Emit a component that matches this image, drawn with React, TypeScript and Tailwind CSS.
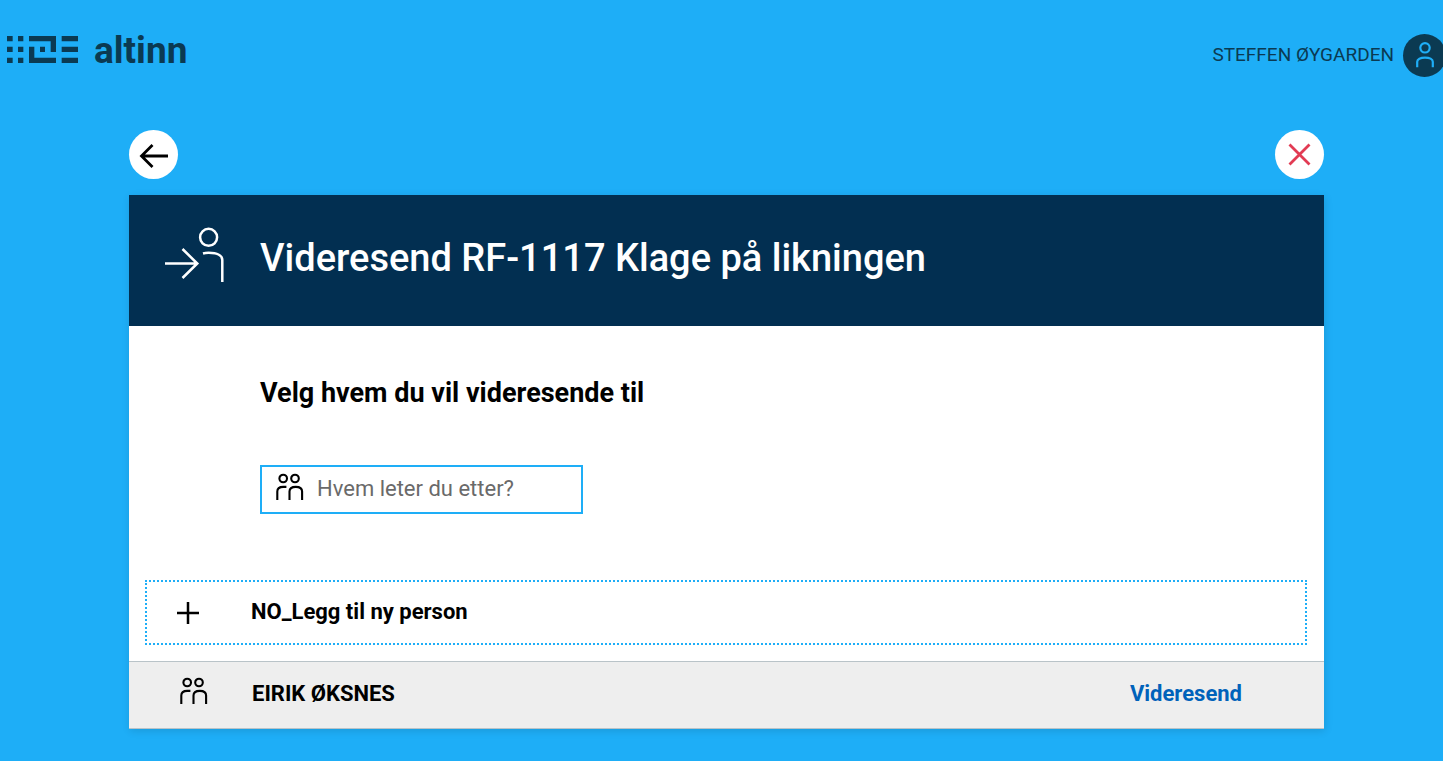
import { useState } from "react";

function AltinnMark() {
  return (
    <svg width="71" height="27" viewBox="0 0 213 81" fill="currentColor" aria-hidden="true">
      <path d="M0 0h17v16H0zM33 0h16v16H33zM0 32h17v16H0zM33 32h16v16H33zM0 65h17v16H0zM33 65h16v16H33z" />
      <path d="M66 0h81v48h-16V16H66zM66 32h16v33h65v16H66zM99 32h15v16H99z" />
      <path d="M164 0h49v16h-49zM164 32h49v16h-49zM164 65h49v16h-49z" />
    </svg>
  );
}

function PersonIcon() {
  return (
    <svg width="20" height="26" viewBox="0 0 20 26" fill="none" stroke="currentColor" strokeWidth="2.2" aria-hidden="true">
      <circle cx="10" cy="5.8" r="4.7" />
      <path d="M2.2 25.2v-5.4c0-2.6 3.2-4.2 7.8-4.2s7.8 1.6 7.8 4.2v5.4" />
    </svg>
  );
}

function PeopleIcon() {
  return (
    <svg width="28" height="28" viewBox="0 0 28 28" fill="none" stroke="currentColor" strokeWidth="2.1" aria-hidden="true">
      <circle cx="7.2" cy="5.5" r="3.8" />
      <circle cx="19" cy="5.5" r="3.8" />
      <path d="M1.3 27v-8.5c0-3.8 2.4-4.6 5.9-4.6h3.2" />
      <path d="M13.500 27v-8.500c0-3.500 2.300-4.600 6.300-4.600s6.300 1.100 6.300 4.600V27" />
    </svg>
  );
}

function ForwardIcon() {
  return (
    <svg width="60" height="56" viewBox="0 0 60 56" fill="none" stroke="currentColor" strokeWidth="2.5" aria-hidden="true">
      <circle cx="43.6" cy="10.3" r="8.5" />
      <path d="M38 26.500c2-.6 3.800-.7 5.600-.7 9 0 13.700 3 13.700 7.200v22" />
      <path d="M0 36.500h32.500M17.500 22l14.800 14.500L17.500 51" />
    </svg>
  );
}

const people = ["EIRIK ØKSNES"];

export default function App() {
  const [query, setQuery] = useState("");

  return (
    <div className="min-h-screen overflow-hidden bg-[#1eaef7] pb-8 font-['Roboto','Liberation_Sans',sans-serif] text-black">
      <header className="flex h-[130px] items-start justify-between pl-[7px] text-[#0b3a52]">
        <a href="#" className="flex items-start gap-4 pt-[26px]">
          <span className="pt-2.5">
            <AltinnMark />
          </span>
          <span className="text-[37px] leading-[50px] font-bold">altinn</span>
        </a>
        <button type="button" className="-mr-[3px] flex items-start gap-[9px] pt-[34px]">
          <span className="text-[19px] leading-[42px]">STEFFEN ØYGARDEN</span>
          <span className="flex size-[43px] items-start justify-center rounded-full bg-[#0b3a52] pt-2 text-[#1eaef7]">
            <PersonIcon />
          </span>
        </button>
      </header>

      <main className="pr-[119px] pl-[129px]">
        <nav className="mb-4 flex justify-between">
          <button type="button" aria-label="Tilbake" className="flex size-[49px] items-center justify-center rounded-full bg-white">
            <svg width="30" height="26" viewBox="0 0 30 26" fill="none" stroke="currentColor" strokeWidth="2.8" aria-hidden="true">
              <path d="M29 14H2.500M13.500 3L2.500 14l11 11" />
            </svg>
          </button>
          <button type="button" aria-label="Lukk" className="flex size-[49px] items-center justify-center rounded-full bg-white text-[#e23b53]">
            <svg width="23" height="23" viewBox="0 0 23 23" fill="none" stroke="currentColor" strokeWidth="2.8" aria-hidden="true">
              <path d="M1.500 1.500l20 20M21.500 1.500l-20 20" />
            </svg>
          </button>
        </nav>

        <section className="bg-white shadow-[1px_2px_8px_rgba(0,0,0,0.12)]">
          <div className="flex h-[131px] items-start bg-[#022f51] pt-8 pl-9 text-white">
            <div className="w-[95px] shrink-0">
              <ForwardIcon />
            </div>
            <h1 className="text-[38px] leading-[62px] font-medium">Videresend RF-1117 Klage på likningen</h1>
          </div>

          <div className="px-[131px] pt-[50px] pb-[66px]">
            <h2 className="mb-[55px] text-[27px] leading-[34px] font-bold">Velg hvem du vil videresende til</h2>
            <label className="flex h-[49px] w-[323px] items-center gap-[13px] border-2 border-[#1eaef7] pl-3.5">
              <span className="shrink-0 pb-1.5">
                <PeopleIcon />
              </span>
              <input
                type="text"
                aria-label="Hvem leter du etter?"
                placeholder="Hvem leter du etter?"
                value={query}
                onChange={(e) => setQuery(e.target.value)}
                className="h-full w-full min-w-0 bg-transparent pb-0.5 text-[22px] outline-none placeholder:text-[#6a6a6a]"
              />
            </label>
          </div>

          <div className="pr-[17px] pb-4 pl-4">
            <button type="button" className="flex h-[65px] w-full items-center border-2 border-dotted border-[#1eaef7] pl-[29px] text-left">
              <span className="w-[75px] shrink-0">
                <svg width="24" height="24" viewBox="0 0 24 24" fill="none" stroke="currentColor" strokeWidth="2.5" aria-hidden="true">
                  <path d="M12 1v22M1 12h22" />
                </svg>
              </span>
              <span className="pb-0.5 text-[22px] leading-7 font-bold">NO_Legg til ny person</span>
            </button>
          </div>

          <ul>
            {people.map((name) => (
              <li key={name} className="flex h-[68px] items-center border-y border-[#b9c3c8] bg-[#eeeeee] pr-[82px] pl-[51px]">
                <span className="w-[72px] shrink-0 pb-2">
                  <PeopleIcon />
                </span>
                <span className="flex-1 pb-0.5 text-[22px] leading-7 font-bold">{name}</span>
                <button type="button" className="pb-0.5 text-[22px] leading-7 font-bold text-[#0062ba]">
                  Videresend
                </button>
              </li>
            ))}
          </ul>
        </section>
      </main>
    </div>
  );
}
